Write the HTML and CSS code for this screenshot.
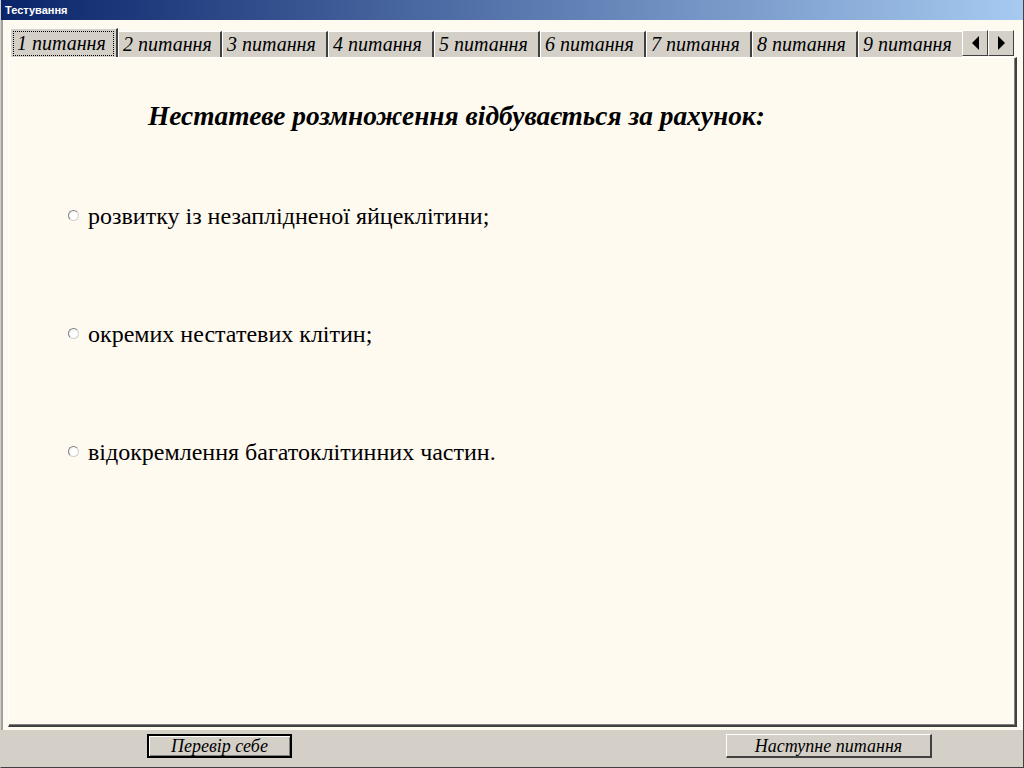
FILE: index.html
```html
<!DOCTYPE html>
<html lang="uk">
<head>
    <meta charset="UTF-8">
    <title>Тестування</title>
    <link rel="stylesheet" href="styles.css">
</head>
<body>
    <div class="window">
        <div class="title-bar">Тестування</div>
        <div class="client">
            <div class="tabs">
                <div class="tab active"><span class="focus">1 питання</span></div>
                <div class="tab">2 питання</div>
                <div class="tab">3 питання</div>
                <div class="tab">4 питання</div>
                <div class="tab">5 питання</div>
                <div class="tab">6 питання</div>
                <div class="tab">7 питання</div>
                <div class="tab">8 питання</div>
                <div class="tab">9 питання</div>
                <div class="scroll-btns">
                    <div class="scroll-btn"><span class="arrow left"></span></div>
                    <div class="scroll-btn"><span class="arrow right"></span></div>
                </div>
            </div>
            <div class="panel">
                <h1 class="question">Нестатеве розмноження відбувається за рахунок:</h1>
                <div class="answers">
                    <label class="answer"><span class="radio"></span>розвитку із незаплідненої яйцеклітини;</label>
                    <label class="answer"><span class="radio"></span>окремих нестатевих клітин;</label>
                    <label class="answer"><span class="radio"></span>відокремлення багатоклітинних частин.</label>
                </div>
            </div>
        </div>
        <div class="footer">
            <button class="btn check-btn">Перевір себе</button>
            <button class="btn next-btn">Наступне питання</button>
        </div>
    </div>
</body>
</html>
```

FILE: styles.css
```css
* {
    box-sizing: border-box;
}
body {
    margin: 0;
    background: #fffaf0;
}
.window {
    width: 1024px;
    height: 768px;
    display: flex;
    flex-direction: column;
    border-left: 1px solid #d4d0c8;
    border-right: 1px solid #404040;
    border-bottom: 1px solid #404040;
}
.title-bar {
    height: 20px;
    background: linear-gradient(to right, #0a246a, #a6caf0);
    color: white;
    font-family: "Liberation Sans", Arial, sans-serif;
    font-weight: bold;
    font-size: 11px;
    line-height: 20px;
    padding-left: 4px;
}
.client {
    flex: 1;
    display: flex;
    flex-direction: column;
    background: #fffaf0;
    padding: 8px 6px 3px 5px;
    border-left: 2px solid #a0a0a0;
}
.tabs {
    display: flex;
    align-items: flex-end;
    height: 29px;
    padding-left: 2px;
}
.tab {
    width: 106px;
    height: 26px;
    background: #d4d0c8;
    border-left: 1px solid #ffffff;
    border-top: 1px solid #ffffff;
    border-right: 2px solid #404040;
    font-family: "Liberation Serif", "Times New Roman", serif;
    font-style: italic;
    font-size: 20px;
    line-height: 24px;
    padding-left: 4px;
    white-space: nowrap;
    overflow: hidden;
    color: #000;
}
.tab.active {
    width: 108px;
    height: 29px;
    padding: 2px 2px 1px 2px;
}
.tab .focus {
    display: block;
    border: 1px dotted #000;
    padding-left: 3px;
    line-height: 23px;
}
.tab:nth-child(2) {
    width: 104px;
}
.tab:nth-child(9) {
    width: 104px;
    border-right: none;
}
.scroll-btns {
    display: flex;
    align-self: flex-start;
    margin-top: 2px;
}
.scroll-btn {
    width: 26px;
    height: 26px;
    background: #d4d0c8;
    border-left: 1px solid #ffffff;
    border-top: 1px solid #ffffff;
    border-right: 1px solid #404040;
    border-bottom: 1px solid #404040;
    display: flex;
    align-items: center;
    justify-content: center;
}
.arrow {
    width: 0;
    height: 0;
    border-top: 7px solid transparent;
    border-bottom: 7px solid transparent;
}
.arrow.left {
    border-right: 7px solid #000;
}
.arrow.right {
    border-left: 7px solid #000;
}
.panel {
    flex: 1;
    background: #fffaf0;
    border-left: 1px solid #ffffff;
    border-top: 1px solid #ffffff;
    border-right: 2px solid #404040;
    border-bottom: 2px solid #404040;
    box-shadow: inset -1px -1px 0 #808080;
    padding: 43px 0 0 139px;
}
.question {
    margin: 0;
    font-family: "Liberation Serif", "Times New Roman", serif;
    font-style: italic;
    font-weight: bold;
    font-size: 27.4px;
    line-height: 31px;
}
.answers {
    display: flex;
    flex-direction: column;
    gap: 92px;
    margin: 71px 0 0 -80px;
}
.answer {
    display: flex;
    align-items: center;
    gap: 9px;
    font-family: "Liberation Serif", "Times New Roman", serif;
    font-size: 24px;
    line-height: 26px;
    color: #000;
}
.radio {
    width: 11px;
    height: 11px;
    border-radius: 50%;
    border: 1px solid #808080;
    border-right-color: #d0d0d0;
    border-bottom-color: #d0d0d0;
    background: radial-gradient(circle at 60% 60%, #ffffff 40%, #e8e8e8);
    margin-top: -2px;
}
.footer {
    height: 37px;
    background: #d4d0c8;
    display: flex;
    align-items: flex-start;
    padding: 4px 0 0 146px;
    gap: 434px;
}
.btn {
    height: 24px;
    background: #d4d0c8;
    border-left: 1px solid #ffffff;
    border-top: 1px solid #ffffff;
    border-right: 2px solid #404040;
    border-bottom: 2px solid #404040;
    font-family: "Liberation Serif", "Times New Roman", serif;
    font-style: italic;
    font-size: 18px;
    line-height: 20px;
    padding: 0;
    color: #000;
}
.check-btn {
    width: 145px;
    border: 2px solid #000;
    box-shadow: inset 1px 1px 0 #fff, inset -1px -1px 0 #808080;
}
.next-btn {
    width: 206px;
}
```
